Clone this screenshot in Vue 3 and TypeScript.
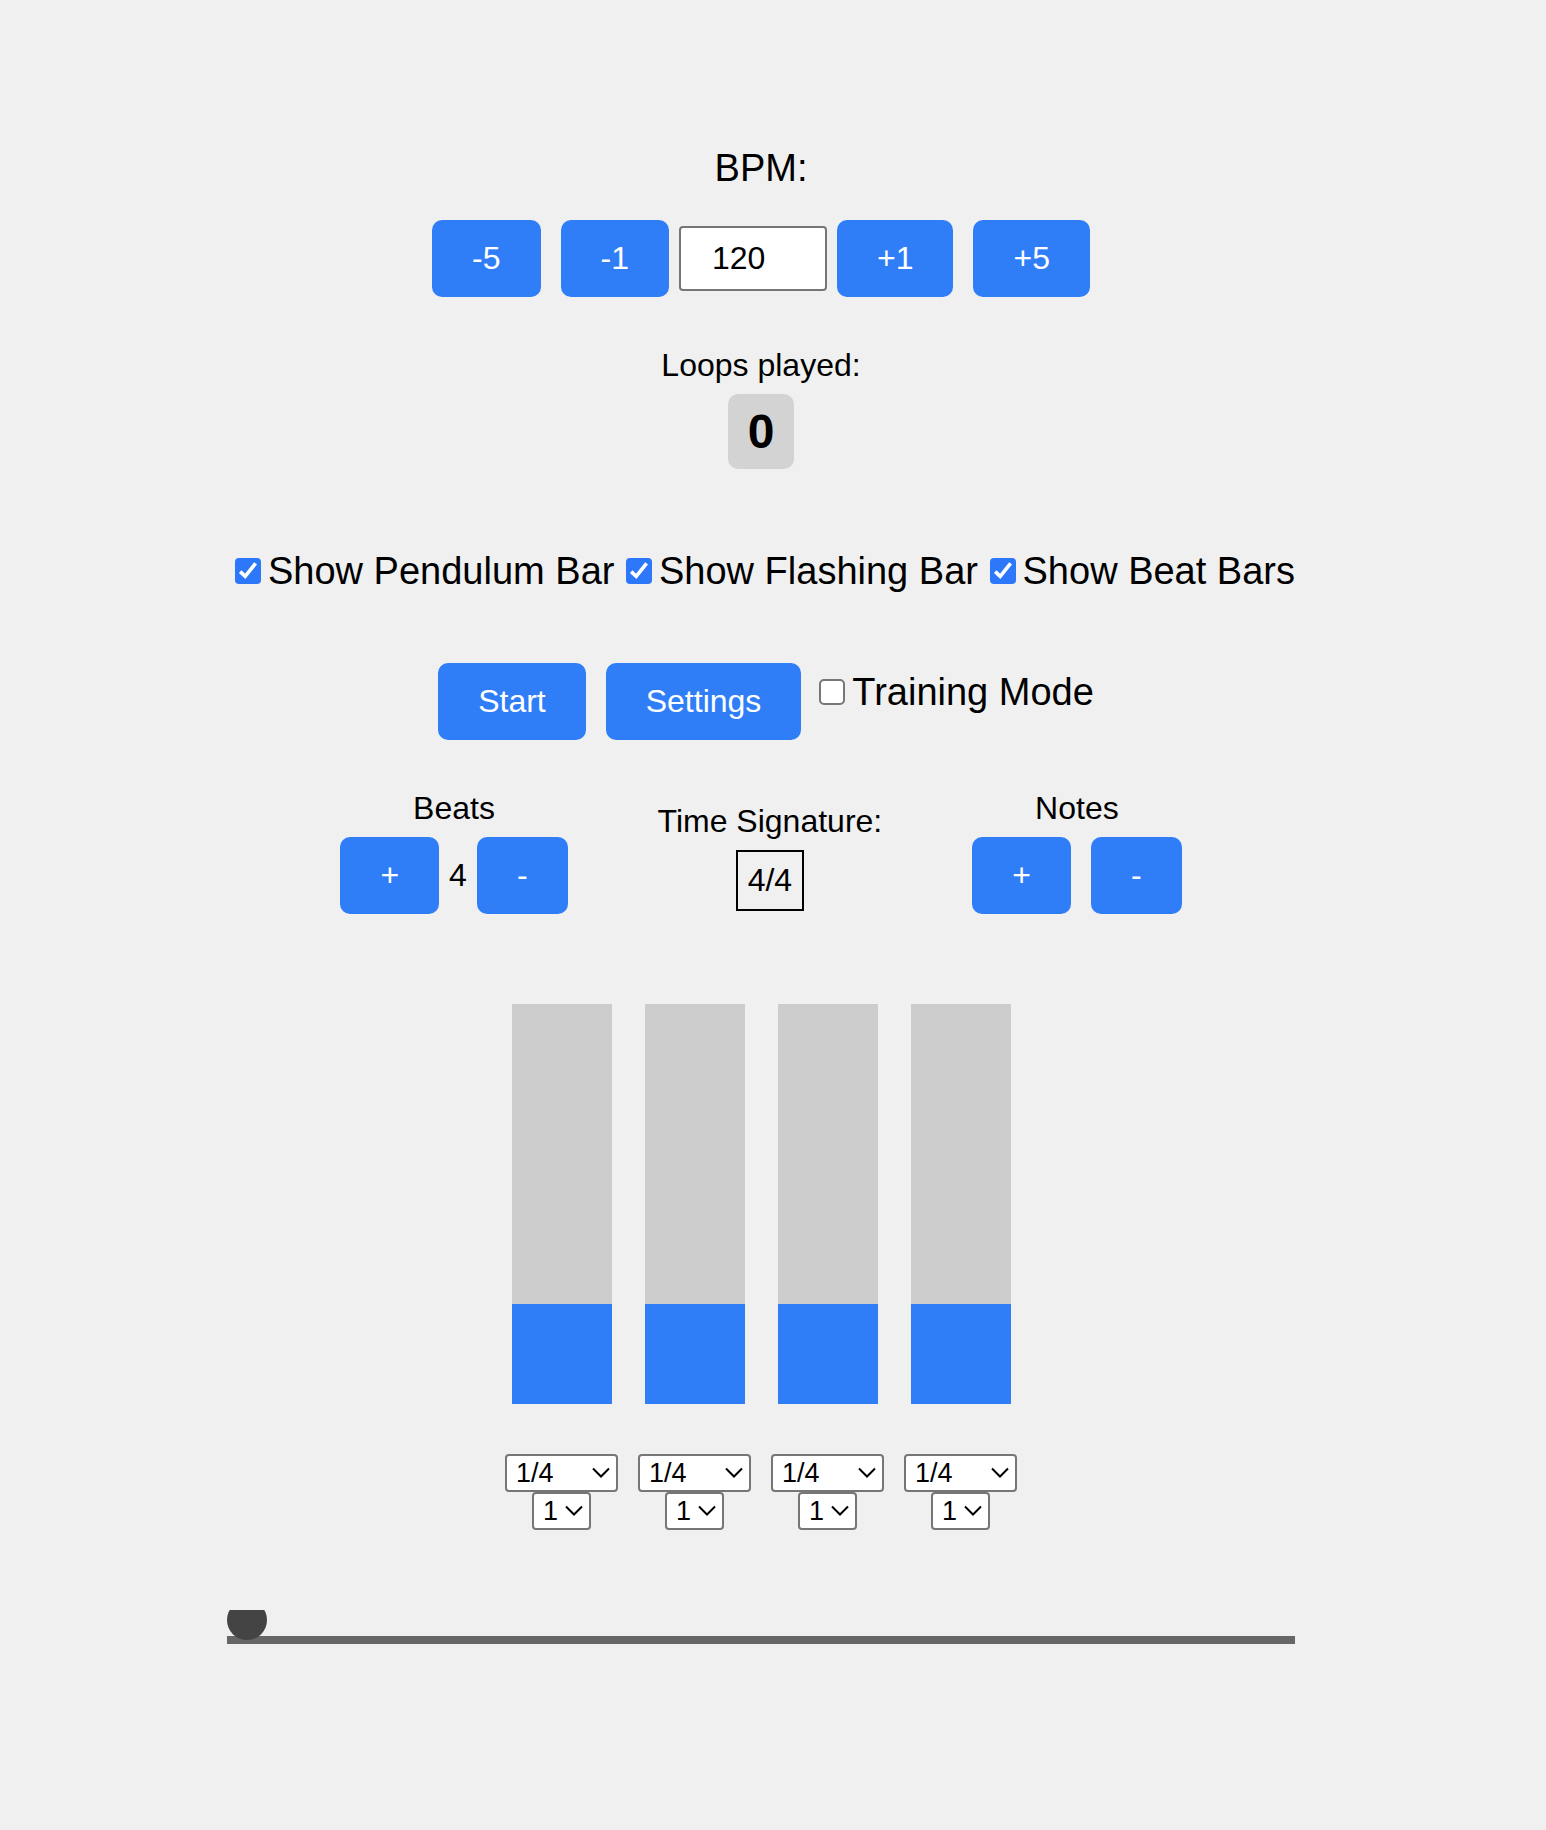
<script setup lang="ts">
import { computed, reactive, ref } from 'vue'

interface Beat {
  note: string
  level: number
}

const bpm = ref(120)
const loops = ref(0)
const running = ref(false)
const training = ref(false)
const noteValue = ref(4)
const levels = [1, 2, 3, 4]
const notes = ['1/4', '1/8', '1/16']

const toggles = reactive([
  { id: 'show-pendulum', label: 'Show Pendulum Bar', on: true },
  { id: 'show-flashing', label: 'Show Flashing Bar', on: true },
  { id: 'show-beats', label: 'Show Beat Bars', on: true },
])

const beats = reactive<Beat[]>(Array.from({ length: 4 }, () => ({ note: '1/4', level: 1 })))
const signature = computed(() => `${beats.length}/${noteValue.value}`)

function addBeat() {
  beats.push({ note: '1/4', level: 1 })
}
function removeBeat() {
  if (beats.length > 1) beats.pop()
}
function moreNotes() {
  noteValue.value = Math.min(16, noteValue.value * 2)
}
function fewerNotes() {
  noteValue.value = Math.max(1, noteValue.value / 2)
}
</script>

<template>
  <main class="page">
    <div class="metronome">
      <label class="title" for="bpm">BPM:</label>
      <div class="row bpm-row">
        <button class="btn" type="button" @click="bpm -= 5">-5</button>
        <button class="btn" type="button" @click="bpm -= 1">-1</button>
        <input id="bpm" v-model.number="bpm" class="bpm-input" type="number" />
        <button class="btn" type="button" @click="bpm += 1">+1</button>
        <button class="btn" type="button" @click="bpm += 5">+5</button>
      </div>

      <div class="loops">
        <span>Loops played:</span>
        <output class="loop-count">{{ loops }}</output>
      </div>

      <div class="toggles">
        <label v-for="t in toggles" :key="t.id" class="check" :for="t.id">
          <span class="box">
            <input :id="t.id" v-model="t.on" type="checkbox" />
            <svg v-if="t.on" viewBox="0 0 26 26" aria-hidden="true">
              <path d="M5.2 13.6 L10.2 18.4 L20.6 5.4" fill="none" stroke="#fff" stroke-width="3.6" />
            </svg>
          </span>
          {{ t.label }}
        </label>
      </div>

      <div class="row actions">
        <button class="btn" type="button" @click="running = !running">Start</button>
        <button class="btn" type="button">Settings</button>
        <label class="check training" for="training">
          <span class="box">
            <input id="training" v-model="training" type="checkbox" />
            <svg v-if="training" viewBox="0 0 26 26" aria-hidden="true">
              <path d="M5.2 13.6 L10.2 18.4 L20.6 5.4" fill="none" stroke="#fff" stroke-width="3.6" />
            </svg>
          </span>
          Training Mode
        </label>
      </div>

      <div class="signature-row">
        <section class="group">
          <span>Beats</span>
          <div class="row">
            <button class="btn" type="button" @click="addBeat">+</button>
            <span>{{ beats.length }}</span>
            <button class="btn" type="button" @click="removeBeat">-</button>
          </div>
        </section>
        <section class="group">
          <span>Time Signature:</span>
          <output class="signature">{{ signature }}</output>
        </section>
        <section class="group">
          <span>Notes</span>
          <div class="row">
            <button class="btn" type="button" @click="moreNotes">+</button>
            <button class="btn" type="button" @click="fewerNotes">-</button>
          </div>
        </section>
      </div>

      <div class="beats">
        <div v-for="(beat, i) in beats" :key="i" class="beat">
          <div class="bar">
            <div class="fill" :style="{ height: beat.level * 25 + '%' }"></div>
          </div>
          <span class="picker wide">
            <select v-model="beat.note" :aria-label="`Note length of beat ${i + 1}`">
              <option v-for="n in notes" :key="n">{{ n }}</option>
            </select>
            <svg viewBox="0 0 18 12" aria-hidden="true">
              <path d="M1 1.5 L9 9.5 L17 1.5" fill="none" stroke="#000" stroke-width="2" />
            </svg>
          </span>
          <span class="picker narrow">
            <select v-model="beat.level" :aria-label="`Level of beat ${i + 1}`">
              <option v-for="l in levels" :key="l" :value="l">{{ l }}</option>
            </select>
            <svg viewBox="0 0 18 12" aria-hidden="true">
              <path d="M1 1.5 L9 9.5 L17 1.5" fill="none" stroke="#000" stroke-width="2" />
            </svg>
          </span>
        </div>
      </div>

      <div class="pendulum">
        <div class="track"></div>
        <div class="bob"></div>
      </div>
    </div>
  </main>
</template>

<style>
body {
  margin: 0;
  background: #f0f0f0;
}
</style>

<style scoped>
.page {
  padding: 146px 24px 146px 0;
  font-family: "Liberation Sans", Arial, sans-serif;
  font-size: 32px;
  line-height: 37px;
  color: #000;
}
.metronome {
  display: flex;
  flex-direction: column;
  align-items: center;
  max-width: 1068px;
  margin: 0 auto;
}
.title {
  font-size: 38px;
  line-height: 44px;
}
.row {
  display: flex;
  align-items: center;
  justify-content: center;
}
.btn {
  margin: 0 10px;
  padding: 20px 40px;
  border: 0;
  border-radius: 10px;
  background: #2f7ef8;
  color: #fff;
  font: inherit;
  cursor: pointer;
}
.bpm-row {
  margin-top: 30px;
}
.bpm-input {
  box-sizing: border-box;
  width: 148px;
  height: 65px;
  padding: 0 0 0 31px;
  border: 2px solid #767676;
  border-radius: 4px;
  background: #fff;
  color: #000;
  font: inherit;
}
.loops {
  display: flex;
  flex-direction: column;
  align-items: center;
  gap: 10px;
  margin-top: 50px;
}
.loop-count {
  padding: 10px 20px;
  border-radius: 10px;
  background: #d3d3d3;
  font-size: 48px;
  font-weight: 700;
  line-height: 55px;
}
.toggles {
  display: flex;
  justify-content: space-between;
  align-self: stretch;
  margin-top: 80px;
  padding-left: 8px;
}
.check {
  display: flex;
  align-items: center;
  gap: 7px;
  font-size: 38px;
  line-height: 44px;
  white-space: nowrap;
}
.box {
  display: grid;
  width: 26px;
  height: 26px;
}
.box > * {
  grid-area: 1 / 1;
}
.box input {
  appearance: none;
  box-sizing: border-box;
  width: 26px;
  height: 26px;
  margin: 0;
  border: 2px solid #767676;
  border-radius: 5px;
  background: #fff;
}
.box input:checked {
  border-color: #2d78fa;
  border-radius: 4px;
  background: #2d78fa;
}
.box svg {
  width: 26px;
  height: 26px;
  pointer-events: none;
}
.actions {
  align-items: flex-start;
  margin-top: 70px;
}
.training {
  margin: 7px 0 0 8px;
}
.signature-row {
  display: flex;
  align-items: center;
  justify-content: center;
  gap: 80px;
  min-height: 134px;
  margin-top: 50px;
}
.group {
  display: flex;
  flex-direction: column;
  align-items: center;
  gap: 10px;
}
.group .row {
  padding-bottom: 10px;
}
.signature {
  padding: 10px;
  border: 2px solid #000;
}
.beats {
  display: flex;
  gap: 20px;
  margin-top: 80px;
}
.beat {
  display: flex;
  flex-direction: column;
  align-items: center;
  width: 113px;
}
.bar {
  display: flex;
  align-items: flex-end;
  width: 100px;
  height: 400px;
  margin-bottom: 50px;
  background: #ccc;
}
.fill {
  width: 100%;
  background: #2f7ef8;
}
.picker {
  display: grid;
  align-items: center;
  height: 38px;
}
.picker > * {
  grid-area: 1 / 1;
}
.picker select {
  appearance: none;
  box-sizing: border-box;
  width: 100%;
  height: 38px;
  padding: 0 0 0 9px;
  border: 2px solid #767676;
  border-radius: 4px;
  background: #fff;
  color: #000;
  font-family: inherit;
  font-size: 27px;
  line-height: 32px;
}
.picker svg {
  justify-self: end;
  width: 18px;
  height: 12px;
  margin-right: 8px;
  pointer-events: none;
}
.wide {
  width: 113px;
}
.narrow {
  width: 59px;
}
.pendulum {
  position: relative;
  display: flex;
  align-items: flex-end;
  align-self: stretch;
  height: 34px;
  margin-top: 80px;
  overflow: hidden;
}
.track {
  flex: 1;
  height: 8px;
  background: #666;
}
.bob {
  position: absolute;
  bottom: 4px;
  left: 0;
  width: 40px;
  height: 40px;
  border-radius: 50%;
  background: #444;
}
</style>
